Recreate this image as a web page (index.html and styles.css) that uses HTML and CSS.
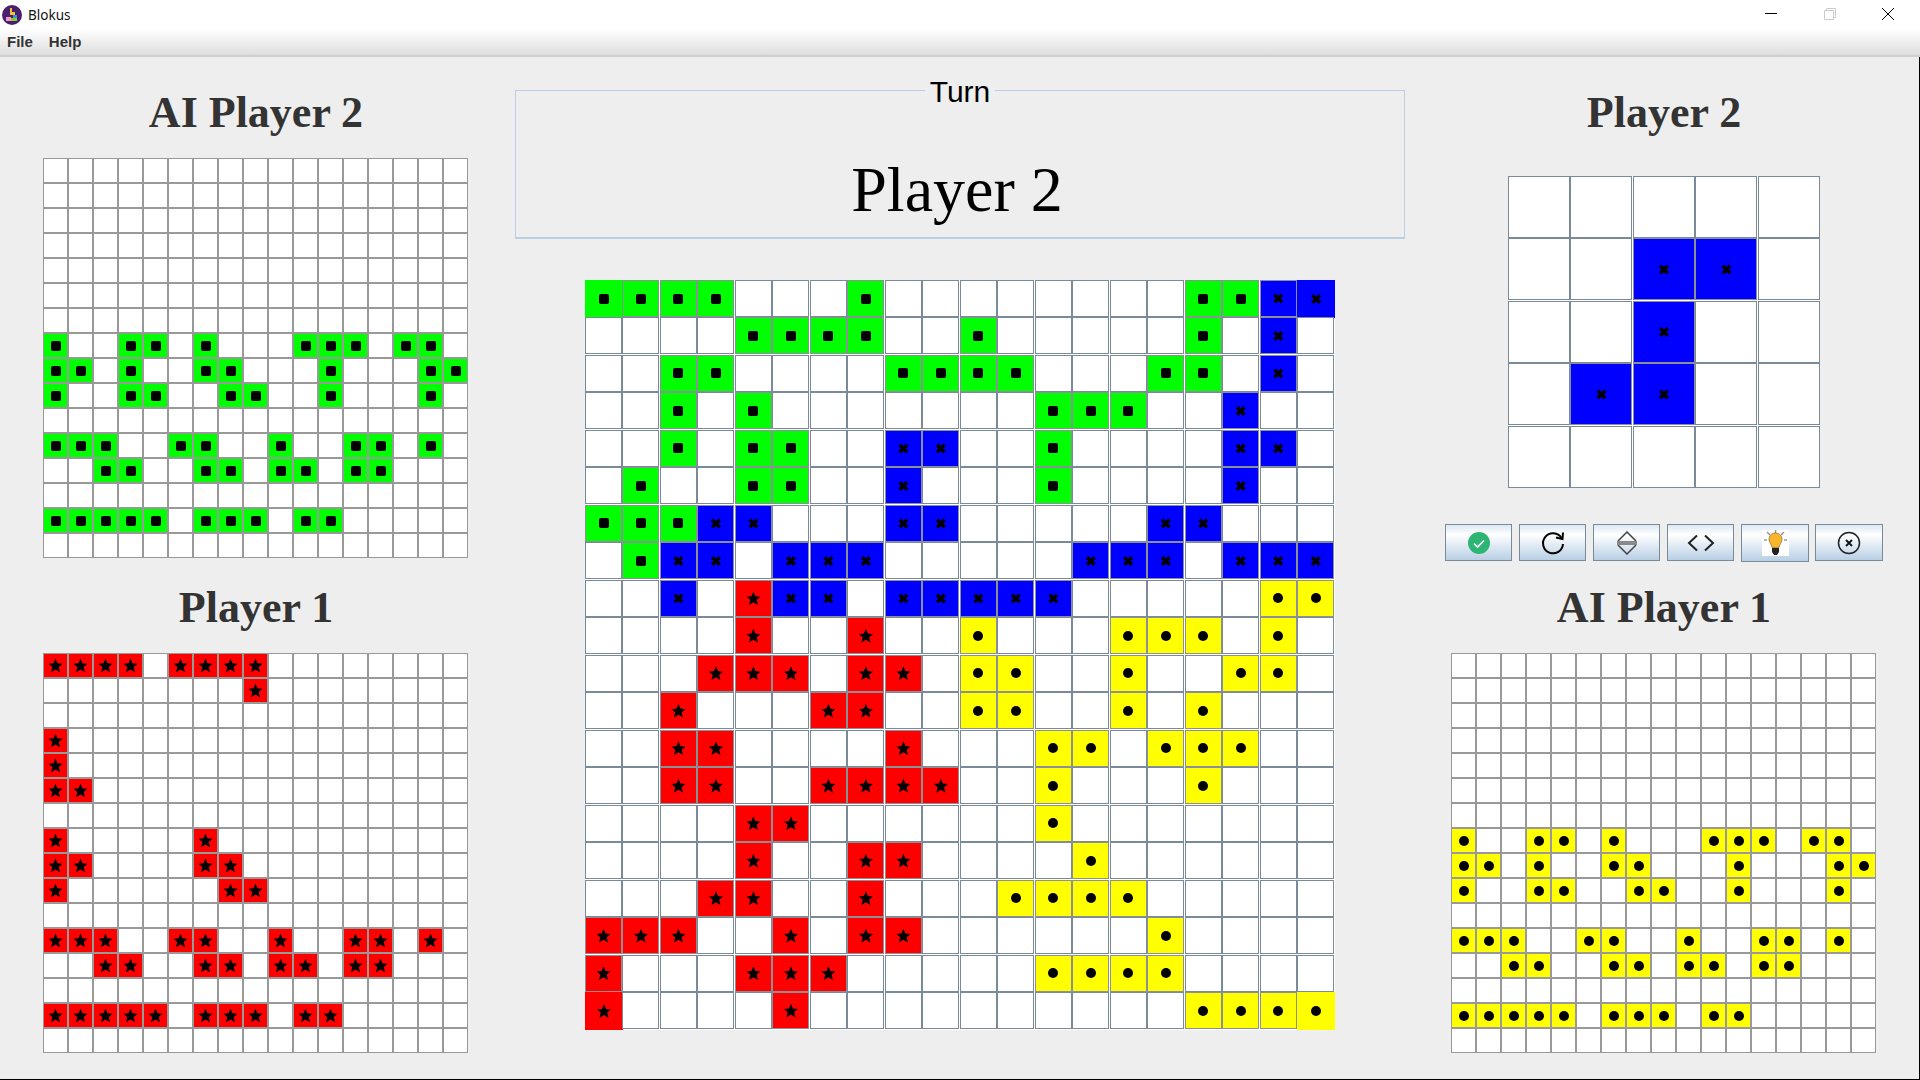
FILE: index.html
```html
<!DOCTYPE html>
<html lang="en">
<head>
    <meta charset="UTF-8">
    <title>Blokus</title>
    <link rel="stylesheet" href="styles.css">
</head>
<body>
    <div class="titlebar">
        <svg class="app-icon" width="20" height="20" viewBox="0 0 20 20">
            <circle cx="10" cy="10" r="10" fill="#4a1f6f"/>
            <rect x="8" y="3" width="2" height="5" fill="#f5c12e"/>
            <rect x="8" y="7" width="5" height="3" fill="#f5c12e"/>
            <rect x="4" y="12" width="5" height="4" fill="#f29ac2"/>
            <rect x="11" y="10" width="4" height="3" fill="#3c8fe0"/>
            <rect x="9" y="13" width="6" height="3" fill="#7ed321"/>
        </svg>
        <span class="app-title">Blokus</span>
        <div class="window-controls">
            <svg width="14" height="14" viewBox="0 0 14 14"><path d="M1 6.5h12" stroke="#000" fill="none"/></svg>
            <svg width="14" height="14" viewBox="0 0 14 14"><path d="M1.5 3.5h9v9h-9zM3.5 3.5v-2h9v9h-2" stroke="#ccc" fill="none"/></svg>
            <svg width="14" height="14" viewBox="0 0 14 14"><path d="M1 1l12 12M13 1L1 13" stroke="#000" fill="none"/></svg>
        </div>
    </div>

    <div class="menubar">
        <span>File</span>
        <span>Help</span>
    </div>

    <div class="content">
        <div class="side">
            <div class="side-top">
                <h2>AI Player 2</h2>
                <div class="pieces" id="piecesAi2"></div>
            </div>
            <div>
                <h2>Player 1</h2>
                <div class="pieces" id="piecesP1"></div>
            </div>
        </div>

        <div class="center">
            <fieldset class="turn">
                <legend>Turn</legend>
                <p>Player 2</p>
            </fieldset>
            <div class="board" id="board"></div>
        </div>

        <div class="side">
            <div class="side-top">
                <h2>Player 2</h2>
                <div class="preview" id="preview"></div>
                <div class="controls">
                    <button type="button">
                        <svg width="24" height="24" viewBox="0 0 24 24">
                            <circle cx="12" cy="12" r="11" fill="#2db573"/>
                            <path d="M7 12.5l3.5 3.5L17 9.5" stroke="#fff" stroke-width="1.6" fill="none"/>
                        </svg>
                    </button>
                    <button type="button">
                        <svg width="26" height="26" viewBox="0 0 26 26">
                            <path d="M21.5 8A10 10 0 1 0 23 14" stroke="#000" stroke-width="2" fill="none"/>
                            <path d="M16 7.5l6.500 1.500 .5-6.500" stroke="#000" stroke-width="2" fill="none"/>
                        </svg>
                    </button>
                    <button type="button">
                        <svg width="24" height="24" viewBox="0 0 24 24">
                            <path d="M3 10l9-9 9 9M3 14l9 9 9-9" stroke="#444" stroke-width="1.500" fill="none"/>
                            <rect x="2" y="10" width="20" height="4" fill="#8a8a8a"/>
                        </svg>
                    </button>
                    <button type="button">
                        <svg width="28" height="18" viewBox="0 0 28 18">
                            <path d="M10 1.500L2 9l8 7.500M18 1.500L26 9l-8 7.500" stroke="#222" stroke-width="2" fill="none"/>
                        </svg>
                    </button>
                    <button type="button" class="tall">
                        <svg class="bulb" width="27" height="26" viewBox="0 0 27 26">
                            <rect width="27" height="26" fill="#fff"/>
                            <path d="M13.500 0v3M5 2l3 3M22 2l-3 3M2 10h3M22 10h3" stroke="#999" stroke-width="1.500" fill="none"/>
                            <path d="M13.500 3c-4 0-6.500 3-6.500 6.500 0 3 2.500 4.500 3 8h7c.5-3.500 3-5 3-8C20 6 17.500 3 13.500 3z" fill="#f9b52b" stroke="#7a5a10" stroke-width=".6"/>
                            <path d="M10 18h7v4l-2 3h-3l-2-3z" fill="#222"/>
                        </svg>
                    </button>
                    <button type="button" class="wide">
                        <svg width="24" height="24" viewBox="0 0 24 24">
                            <circle cx="12" cy="12" r="10.500" stroke="#222" stroke-width="1.500" fill="none"/>
                            <path d="M9 9l6 6M15 9l-6 6" stroke="#111" stroke-width="1.800" fill="none"/>
                        </svg>
                    </button>
                </div>
            </div>
            <div>
                <h2>AI Player 1</h2>
                <div class="pieces" id="piecesAi1"></div>
            </div>
        </div>
    </div>

    <script src="script.js"></script>
</body>
</html>
```

FILE: styles.css
```css
* {
    box-sizing: border-box;
    margin: 0;
    padding: 0;
}

body {
    width: 1920px;
    height: 1080px;
    overflow: hidden;
    background: #eeeeee;
    font-family: "Liberation Sans", sans-serif;
}

.titlebar {
    height: 29px;
    background: white;
    display: flex;
    align-items: center;
    padding-left: 2px;
}

.app-icon {
    margin-right: 6px;
}

.app-title {
    font-family: "Noto Sans", sans-serif;
    font-size: 13.5px;
    color: #111;
}

.window-controls {
    margin-left: auto;
    display: flex;
    gap: 44.5px;
    padding-right: 25px;
    margin-top: -1px;
}

.menubar {
    height: 28px;
    display: flex;
    align-items: center;
    gap: 16px;
    padding: 0 0 2px 7px;
    font-size: 15px;
    font-weight: bold;
    color: #333;
    background: linear-gradient(#ffffff, #dedede);
    border-bottom: 2px solid #cfcfcf;
}

.content {
    height: 1023px;
    display: grid;
    grid-template-columns: 512px 896px 512px;
    box-shadow: inset -1px -1px 0 #000;
}

.side {
    padding-top: 30px;
    display: flex;
    flex-direction: column;
    align-items: center;
}

.side-top {
    height: 495px;
    display: flex;
    flex-direction: column;
    align-items: center;
}

h2 {
    height: 51px;
    line-height: 51px;
    margin-bottom: 20px;
    font-family: "Liberation Serif", serif;
    font-size: 44px;
    font-weight: bold;
    color: #333;
    text-align: center;
}

.pieces {
    display: grid;
    grid-template-columns: repeat(17, 25px);
    grid-auto-rows: 25px;
    width: 426px;
}

.pieces .cell {
    border: 1px solid #999999;
}

.center {
    display: flex;
    flex-direction: column;
    align-items: center;
}

.turn {
    width: 890px;
    height: 168px;
    margin-top: 14px;
    border: 1px solid #b8cfe5;
    border-bottom-width: 2px;
    text-align: center;
}

.turn legend {
    margin: 0 auto;
    padding: 4px 5px 0;
    font-size: 30px;
    color: #000;
}

.turn p {
    margin-top: 44px;
    font-family: "Liberation Serif", serif;
    font-size: 64px;
    line-height: 74px;
    color: #000;
    padding-right: 6px;
}

.board {
    display: grid;
    grid-template-columns: repeat(20, 37.49px);
    grid-template-rows: repeat(20, 37.49px);
    width: 750px;
    height: 750px;
    margin-top: 41px;
    background: white;
}

.preview {
    display: grid;
    grid-template-columns: repeat(5, 62.49px);
    grid-template-rows: repeat(5, 62.49px);
    width: 312px;
    margin-top: 18px;
    background: white;
}

.board .cell {
    width: 37px;
    height: 37px;
    border: 1px solid #7a8a99;
}

.board .cell.corner {
    width: 38px;
    height: 38px;
    border: none;
}

.preview .cell {
    width: 62px;
    height: 62px;
    border: 1px solid #7a8a99;
}

.cell {
    background: white;
    display: flex;
    align-items: center;
    justify-content: center;
}

.board .cell.g,
.board .cell.b,
.board .cell.r,
.board .cell.y,
.preview .cell.b {
    border-color: #8a9096;
}

.cell.g { background: #00ff00; }
.cell.b { background: #0000ff; }
.cell.r { background: #ff0000; }
.cell.y { background: #ffff00; }

.cell.g::after,
.cell.y::after,
.cell.b::after {
    content: "";
    width: 10px;
    height: 10px;
    background: #000;
}

.cell.g::after {
    border-radius: 2px;
}

.cell.y::after {
    border-radius: 50%;
}

.cell.b::after {
    clip-path: polygon(0 25%, 25% 0, 50% 25%, 75% 0, 100% 25%, 75% 50%, 100% 75%, 75% 100%, 50% 75%, 25% 100%, 0 75%, 25% 50%);
}

.cell.r::after {
    content: "";
    width: 14px;
    height: 14px;
    background: #000;
    clip-path: polygon(50% 0, 64% 34%, 100% 38%, 73% 60%, 82% 98%, 50% 78%, 18% 98%, 27% 60%, 0 38%, 36% 34%);
}

.controls {
    width: 438px;
    margin-top: 36px;
    display: flex;
    align-items: flex-start;
    gap: 7px;
}

.controls button {
    width: 67px;
    height: 37px;
    border: 1px solid #7a8a99;
    background: linear-gradient(#dde8f3, #ffffff 28%, #b8cfe5);
    display: flex;
    align-items: center;
    justify-content: center;
}

.controls button.tall {
    width: 68px;
    height: 38px;
    margin-right: -1px;
}

.controls button.wide {
    width: 68px;
}
```

FILE: script.js
```js
// piece trays are laid out the same for every player apart from the first rows
const trayBottom = [
    'XXX..XX..X..XX.X.',
    '..XX..XX.XX.XX...',
    '.................',
    'XXXXX.XXX.XX.....',
    '.................'
];

const trayAi = [
    '.................',
    '.................',
    '.................',
    '.................',
    '.................',
    '.................',
    '.................',
    'X..XX.X...XXX.XX.',
    'XX.X..XX...X...XX',
    'X..XX..XX..X...X.',
    '.................'
].concat(trayBottom);

const trayHuman = [
    'XXXX.XXXX........',
    '........X........',
    '.................',
    'X................',
    'X................',
    'XX...............',
    '.................',
    'X.....X..........',
    'XX....XX.........',
    'X......XX........',
    '.................'
].concat(trayBottom);

const boardRows = [
    'GGGG...G........GGBB',
    '....GGGG..G.....G.B.',
    '..GG....GGGG...GG.B.',
    '..G.G.......GGG..B..',
    '..G.GG..BB..G....BB.',
    '.G..GG..B...G....B..',
    'GGGBB...BB.....BB...',
    '.GBB.BBB.....BBB.BBB',
    '..B.RBB.BBBBB.....YY',
    '....R..R..Y...YYY.Y.',
    '...RRR.RR.YY..Y..YY.',
    '..R...RR..YY..Y.Y...',
    '..RR....R...YY.YYY..',
    '..RR..RRRR..Y...Y...',
    '....RR......Y.......',
    '....R..RR....Y......',
    '...RR..R...YYYY.....',
    'RRR..R.RR......Y....',
    'R...RRR.....YYYY....',
    'R....R..........YYYY'
];

const previewRows = [
    '.....',
    '..BB.',
    '..B..',
    '.BB..',
    '.....'
];

function renderCells(id, rows, color) {
    const last = rows.length - 1;
    document.getElementById(id).innerHTML = rows.map((row, r) =>
        row.split('').map((ch, c) => {
            let cls = 'cell';
            if (ch !== '.') cls += ' ' + (color || ch.toLowerCase());
            if (id === 'board' && (r === 0 || r === last) && (c === 0 || c === row.length - 1)) cls += ' corner';
            return `<div class="${cls}"></div>`;
        }).join('')
    ).join('');
}

renderCells('piecesAi2', trayAi, 'g');
renderCells('piecesP1', trayHuman, 'r');
renderCells('piecesAi1', trayAi, 'y');
renderCells('board', boardRows);
renderCells('preview', previewRows);
```
